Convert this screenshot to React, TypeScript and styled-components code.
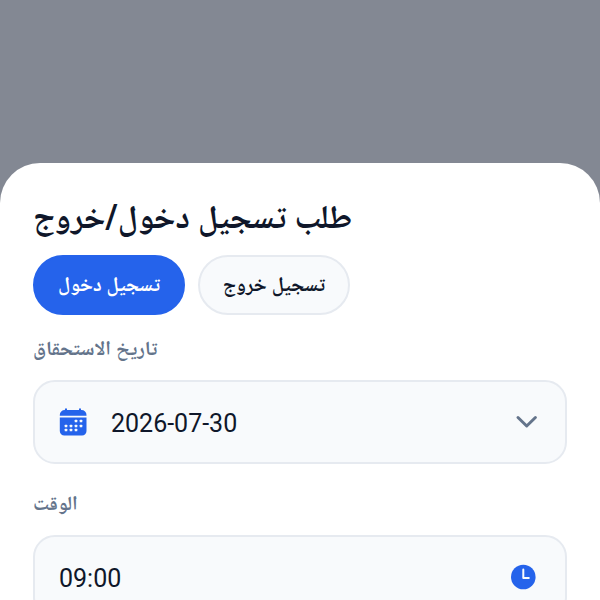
import React, { useState } from 'react';
import styled, { createGlobalStyle } from 'styled-components';

const bodyFont = 'Roboto, "Noto Naskh Arabic", "DejaVu Sans", sans-serif';

const GlobalStyle = createGlobalStyle`
  *, *::before, *::after { box-sizing: border-box; }
  body {
    margin: 0;
    background: #838893;
    color: #0f172a;
    font-family: ${bodyFont};
    overflow: hidden;
  }
  button, input { font: inherit; color: inherit; }
`;

const Backdrop = styled.div`
  display: flex;
  flex-direction: column;
  height: 100vh;
  padding-top: 163px;
  overflow: hidden;
`;

const Sheet = styled.main`
  flex: 1 0 auto;
  padding: 30px 33px;
  background: #ffffff;
  border-radius: 40px 40px 0 0;
`;

const Title = styled.h1`
  margin: 0 0 14px;
  font-size: 33px;
  line-height: 48px;
  font-weight: 700;
  white-space: nowrap;
`;

const Segments = styled.div`
  display: flex;
  gap: 13px;
  margin-bottom: 19px;
`;

const Segment = styled.button<{ $active: boolean }>`
  min-width: 152px;
  height: 60px;
  padding: 0 22px 2px;
  border: 2px solid ${(p) => (p.$active ? '#2563eb' : '#e6eaf0')};
  border-radius: 30px;
  background: ${(p) => (p.$active ? '#2563eb' : '#f8fafc')};
  color: ${(p) => (p.$active ? '#ffffff' : '#0f172a')};
  font-size: 20px;
  line-height: 28px;
  font-weight: 700;
  white-space: nowrap;
  cursor: pointer;
`;

const Field = styled.div`
  margin-bottom: 25px;
`;

const Label = styled.label`
  display: block;
  margin-bottom: 18px;
  color: #64748b;
  font-size: 20px;
  line-height: 28px;
  font-weight: 700;
`;

const Control = styled.div`
  display: flex;
  align-items: center;
  gap: 24px;
  width: 100%;
  height: 84px;
  padding: 0 24px;
  border: 2px solid #e6eaf0;
  border-radius: 22px;
  background: #f8fafc;
  font-size: 25px;
  line-height: 32px;
`;

const DateButton = styled(Control).attrs({ as: 'button' })`
  text-align: left;
  cursor: pointer;
`;

const Value = styled.span`
  flex: 1;
  padding-top: 3px;
`;

const TimeInput = styled.input`
  flex: 1;
  min-width: 0;
  padding: 3px 0 0;
  border: 0;
  outline: 0;
  background: transparent;
`;

const Icon = styled.svg`
  flex: none;
  display: block;
`;

const dots = [
  [17, 13], [22, 13],
  [7, 18], [12, 18], [17, 18], [22, 18],
  [7, 22], [12, 22], [17, 22],
];

function CalendarIcon() {
  return (
    <Icon width="28" height="28" viewBox="0 0 28 28" aria-hidden="true">
      <path
        fill="#2563eb"
        d="M6 1.200a1 1 0 0 1 2 0V2h12v-.8a1 1 0 0 1 2 0V2h.5a5 5 0 0 1 5 5v.8H.8V7a5 5 0 0 1 5-5z"
      />
      <path fill="#2563eb" d="M.8 9.600h26.700V23a4.500 4.500 0 0 1-4.500 4.500H5.300A4.500 4.500 0 0 1 .8 23z" />
      {dots.map(([x, y]) => (
        <rect key={`${x}-${y}`} x={x - 1.3} y={y - 1.3} width="2.600" height="2.600" rx="0.600" fill="#f8fafc" />
      ))}
    </Icon>
  );
}

function ChevronIcon() {
  return (
    <Icon width="32" height="32" viewBox="0 0 32 32" aria-hidden="true">
      <path
        d="M9 11.500l8.700 8.500 8.700-8.500"
        fill="none"
        stroke="#64748b"
        strokeWidth="3"
        strokeLinecap="round"
        strokeLinejoin="round"
      />
    </Icon>
  );
}

function ClockIcon() {
  return (
    <Icon width="32" height="32" viewBox="0 0 32 32" aria-hidden="true">
      <circle cx="14.300" cy="16" r="12.300" fill="#2563eb" />
      <path d="M14.300 8.500V17h5.500" fill="none" stroke="#f8fafc" strokeWidth="2" strokeLinecap="round" strokeLinejoin="round" />
    </Icon>
  );
}

export default function App() {
  const [kind, setKind] = useState<'in' | 'out'>('in');
  const [time, setTime] = useState('09:00');

  return (
    <Backdrop>
      <GlobalStyle />
      <Sheet>
        <Title>طلب تسجيل دخول/خروج</Title>
        <Segments>
          <Segment type="button" $active={kind === 'in'} aria-pressed={kind === 'in'} onClick={() => setKind('in')}>
            تسجيل دخول
          </Segment>
          <Segment type="button" $active={kind === 'out'} aria-pressed={kind === 'out'} onClick={() => setKind('out')}>
            تسجيل خروج
          </Segment>
        </Segments>
        <Field>
          <Label htmlFor="due-date">تاريخ الاستحقاق</Label>
          <DateButton id="due-date">
            <CalendarIcon />
            <Value>2026-07-30</Value>
            <ChevronIcon />
          </DateButton>
        </Field>
        <Field>
          <Label htmlFor="time">الوقت</Label>
          <Control>
            <TimeInput id="time" type="text" value={time} onChange={(e) => setTime(e.target.value)} />
            <ClockIcon />
          </Control>
        </Field>
      </Sheet>
    </Backdrop>
  );
}
